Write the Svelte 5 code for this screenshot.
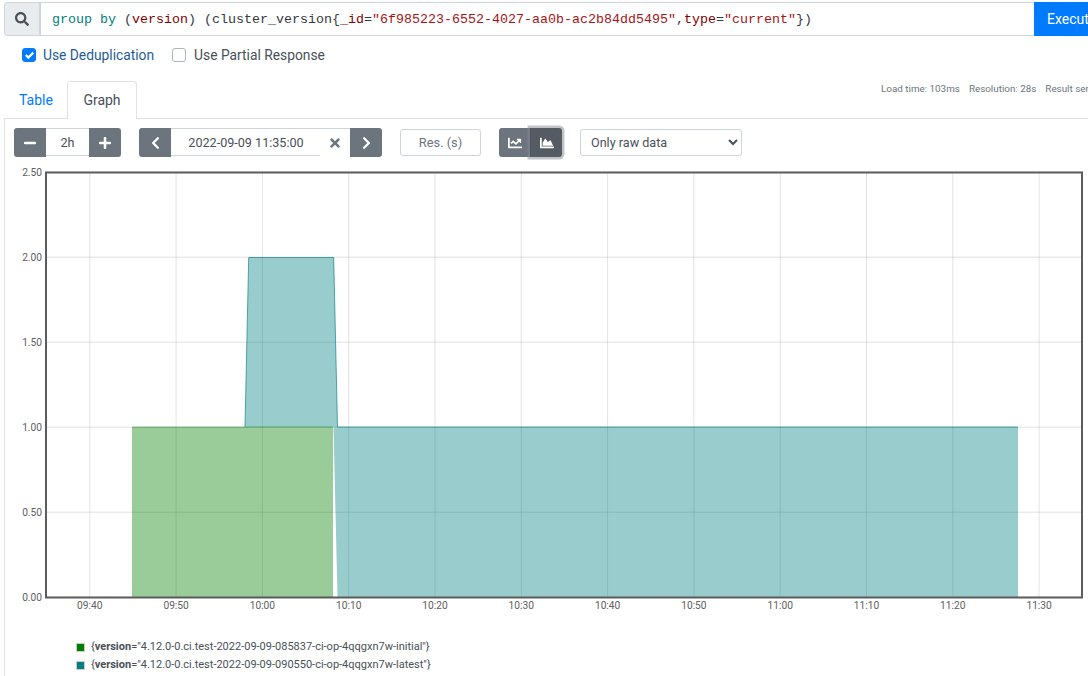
<script>
  const xTicks = [['09:40',89.8],['09:50',176.1],['10:00',262.4],['10:10',348.7],['10:20',435],['10:30',521.3],['10:40',607.6],['10:50',693.9],['11:00',780.2],['11:10',866.5],['11:20',952.8],['11:30',1039.1]];
  const yTicks = [['2.50',172.3],['2.00',257.3],['1.50',342.3],['1.00',427.3],['0.50',512.3],['0.00',597.3]];
</script>

<div class="page">
  <div class="query">
    <div class="prepend">
      <svg class="ic" viewBox="0 0 512 512" width="14" height="14"><path d="M505 442.7L405.3 343c-4.5-4.5-10.6-7-17-7H372c27.6-35.3 44-79.7 44-128C416 93.1 322.9 0 208 0S0 93.1 0 208s93.1 208 208 208c48.3 0 92.7-16.4 128-44v16.3c0 6.4 2.5 12.5 7 17l99.7 99.7c9.4 9.4 24.6 9.4 33.9 0l28.3-28.3c9.4-9.4 9.4-24.6.1-34zM208 336c-70.7 0-128-57.2-128-128 0-70.7 57.2-128 128-128 70.7 0 128 57.2 128 128 0 70.7-57.2 128-128 128z"/></svg>
    </div>
    <div class="code"><span class="kw">group by</span> (<span class="lb">version</span>) (cluster_version&#123;<span class="lb">_id</span>=<span class="str">"6f985223-6552-4027-aa0b-ac2b84dd5495"</span>,<span class="lb">type</span>=<span class="str">"current"</span>&#125;)</div>
    <button class="exec">Execute</button>
  </div>

  <div class="opts">
    <label class="opt on">
      <span class="box checked"><svg viewBox="0 0 8 8" width="9" height="9"><path fill="#fff" d="M6.564.75l-3.59 3.612-1.538-1.55L0 4.26l2.974 2.99L8 2.193z"/></svg></span>
      Use Deduplication
    </label>
    <label class="opt">
      <span class="box"></span>
      Use Partial Response
    </label>
  </div>

  <div class="tabs">
    <span class="tab">Table</span>
    <span class="tab active">Graph</span>
    <div class="stats"><span>Load time: 103ms</span><span>Resolution: 28s</span><span>Result series: 2</span></div>
  </div>

  <div class="pane">
    <div class="controls">
      <div class="group">
        <button class="btn"><svg class="ic" viewBox="0 0 448 512" width="12" height="14"><path d="M416 208H32c-17.67 0-32 14.33-32 32v32c0 17.67 14.33 32 32 32h384c17.67 0 32-14.33 32-32v-32c0-17.67-14.33-32-32-32z"/></svg></button>
        <div class="field range">2h</div>
        <button class="btn"><svg class="ic" viewBox="0 0 448 512" width="12" height="14"><path d="M416 208H272V64c0-17.67-14.33-32-32-32h-32c-17.67 0-32 14.33-32 32v144H32c-17.67 0-32 14.33-32 32v32c0 17.67 14.33 32 32 32h144v144c0 17.67 14.33 32 32 32h32c17.67 0 32-14.33 32-32V304h144c17.67 0 32-14.33 32-32v-32c0-17.67-14.33-32-32-32z"/></svg></button>
      </div>
      <div class="group end">
        <button class="btn"><svg class="ic" viewBox="0 0 320 512" width="9" height="14"><path d="M34.52 239.03L228.87 44.69c9.37-9.37 24.57-9.37 33.94 0l22.67 22.67c9.36 9.36 9.37 24.52.04 33.9L131.49 256l154.02 154.75c9.34 9.38 9.32 24.54-.04 33.9l-22.67 22.67c-9.37 9.37-24.57 9.37-33.94 0L34.52 272.97c-9.37-9.37-9.37-24.57 0-33.94z"/></svg></button>
        <div class="field date">2022-09-09 11:35:00</div>
        <div class="clear"><svg viewBox="0 0 352 512" width="10" height="14"><path fill="#6c757d" d="M242.72 256l100.07-100.07c12.28-12.28 12.28-32.19 0-44.48l-22.24-22.24c-12.28-12.28-32.19-12.28-44.48 0L176 189.28 75.93 89.21c-12.28-12.28-32.19-12.28-44.48 0L9.21 111.45c-12.28 12.28-12.28 32.19 0 44.48L109.28 256 9.21 356.07c-12.28 12.28-12.28 32.19 0 44.48l22.24 22.24c12.28 12.28 32.2 12.28 44.48 0L176 322.72l100.07 100.07c12.28 12.28 32.2 12.28 44.48 0l22.24-22.24c12.28-12.28 12.28-32.19 0-44.48L242.72 256z"/></svg></div>
        <button class="btn"><svg class="ic" viewBox="0 0 320 512" width="9" height="14"><path d="M285.476 272.971L91.132 467.314c-9.373 9.373-24.569 9.373-33.941 0l-22.667-22.667c-9.357-9.357-9.375-24.522-.04-33.901L188.505 256 34.484 101.255c-9.335-9.379-9.317-24.544.04-33.901l22.667-22.667c9.373-9.373 24.569-9.373 33.941 0L285.475 239.03c9.373 9.372 9.373 24.568.001 33.941z"/></svg></button>
      </div>
      <div class="res">Res. (s)</div>
      <div class="group stack">
        <button class="btn sline"><svg class="ic" viewBox="0 0 512 512" width="14" height="14"><path d="M496 384H64V80c0-8.84-7.16-16-16-16H16C7.16 64 0 71.16 0 80v336c0 17.67 14.33 32 32 32h464c8.84 0 16-7.16 16-16v-32c0-8.84-7.16-16-16-16zM464 96H345.94c-21.38 0-32.09 25.85-16.97 40.97l32.4 32.4L288 242.75l-73.37-73.37c-12.5-12.5-32.76-12.5-45.25 0l-68.69 68.69c-6.25 6.25-6.25 16.38 0 22.63l22.62 22.62c6.25 6.25 16.38 6.25 22.63 0L192 237.25l73.37 73.37c12.5 12.5 32.76 12.5 45.25 0l96-96 32.4 32.4c15.12 15.12 40.97 4.41 40.97-16.97V112c.01-8.84-7.15-16-15.99-16z"/></svg></button>
        <button class="btn sarea"><svg class="ic" viewBox="0 0 512 512" width="14" height="14"><path d="M500 384c6.6 0 12 5.4 12 12v40c0 6.6-5.4 12-12 12H12c-6.6 0-12-5.4-12-12V76c0-6.6 5.4-12 12-12h40c6.6 0 12 5.4 12 12v308h436zM372.7 159.5L288 216l-85.3-113.7c-5.1-6.8-15.5-6.3-19.9 1L96 248v104h384l-89.9-187.8c-3.2-6.5-11.4-8.7-17.4-4.7z"/></svg></button>
      </div>
      <select class="sel"><option>Only raw data</option></select>
    </div>

    <svg class="chart" viewBox="14 160 1074 466" width="1074" height="466">
      <rect x="46" y="172" width="1037" height="425" fill="#fff"/>
      {#each xTicks as t}
        <line x1={t[1]} x2={t[1]} y1="172" y2="597" class="grid"/>
        <text x={t[1]} y="609" text-anchor="middle" class="tick">{t[0]}</text>
      {/each}
      {#each yTicks as t}
        <line x1="46" x2="1083" y1={t[1]} y2={t[1]} class="grid hz"/>
        <text x="42" y={t[1] + 3.5} text-anchor="end" class="tick">{t[0]}</text>
      {/each}
      <polygon points="132,427 333,427 333,597 132,597" fill="#008000" fill-opacity="0.4"/>
      <polyline points="132,427 333,427" fill="none" stroke="#008000" stroke-opacity="0.4" stroke-width="1"/>
      <polygon points="245,427 248.7,257.5 333.7,257.5 337.5,427 1018,427 1018,597 337.5,597 333.5,427" fill="#008080" fill-opacity="0.4"/>
      <polyline points="245,427 248.7,257.5 333.7,257.5 337.5,427 1018,427" fill="none" stroke="#008080" stroke-opacity="0.65" stroke-width="1"/>
      <rect x="46" y="172.5" width="1036" height="425" fill="none" stroke="#5c5c5c" stroke-width="2"/>
    </svg>

    <div class="legend">
      <div class="item"><span class="swatch green"></span><span>&#123;<b>version</b>="4.12.0-0.ci.test-2022-09-09-085837-ci-op-4qqgxn7w-initial"&#125;</span></div>
      <div class="item"><span class="swatch teal"></span><span>&#123;<b>version</b>="4.12.0-0.ci.test-2022-09-09-090550-ci-op-4qqgxn7w-latest"&#125;</span></div>
    </div>
  </div>
</div>

<style>
  :global(body) { margin: 0; overflow: hidden; background: #fff; }
  .page { width: 1088px; height: 676px; overflow: hidden; font-family: Roboto, sans-serif; color: #495057; font-size: 13.33px; box-sizing: border-box; padding-top: 2px; }
  .ic { fill: currentColor; display: block; }
  .query { display: flex; margin-left: 4px; height: 34px; width: 1150px; }
  .prepend { width: 37px; box-sizing: border-box; background: #e9ecef; border: 1px solid #ced4da; border-right-width: 2px; border-radius: 4px 0 0 4px; display: flex; align-items: center; justify-content: center; color: #495057; }
  .code { width: 993px; box-sizing: border-box; border-top: 1px solid #ced4da; border-bottom: 1px solid #ced4da; padding-left: 11px; font-family: "Liberation Mono", monospace; font-size: 13.33px; line-height: 33px; color: #343a40; white-space: pre; }
  .kw { color: #008080; }
  .lb { color: #800000; }
  .str { color: #a31515; }
  .exec { width: 100px; height: 34px; border: 0; padding: 0 0 0 13px; text-align: left; background: #007bff; color: #fff; font-family: Roboto, sans-serif; font-size: 14px; border-radius: 0; }
  .opts { display: flex; margin: 10px 0 0 22px; height: 18px; font-size: 13.8px; line-height: 18px; }
  .opt { display: flex; align-items: center; margin-right: 18px; color: #495057; }
  .opt.on { color: #1f5c99; }
  .box { width: 14px; height: 14px; box-sizing: border-box; border: 1px solid #adb5bd; border-radius: 3px; margin-right: 8px; background: #fff; display: flex; align-items: center; justify-content: center; }
  .box.checked { background: #007bff; border-color: #007bff; margin-right: 7px; }
  .tabs { position: relative; display: flex; height: 37px; margin-top: 17px; margin-left: 4px; font-size: 14px; align-items: flex-end; }
  .tab { box-sizing: border-box; width: 63px; height: 37px; line-height: 37px; padding: 0 0 0 14px; color: #007bff; border: 1px solid transparent; border-bottom: 0; }
  .tab.active { color: #495057; background: #fff; border-color: #dee2e6; border-radius: 4px 4px 0 0; width: 70px; height: 38px; margin-bottom: -1px; position: relative; z-index: 1; padding: 0; text-align: center; }
  .stats { position: absolute; left: 877px; top: 2px; display: flex; gap: 9px; font-size: 9.85px; white-space: nowrap; color: #6c757d; line-height: 12px; }
  .pane { margin-left: 4px; border-left: 1px solid #dee2e6; border-top: 1px solid #dee2e6; padding: 9px 0 0 9px; height: 560px; box-sizing: border-box; }
  .controls { display: flex; align-items: center; height: 29px; }
  .group { display: flex; height: 29px; }
  .group.end { margin-left: 18px; }
  .btn { width: 32px; height: 29px; padding: 0; border: 0; background: #6c757d; color: #fff; display: flex; align-items: center; justify-content: center; }
  .group .btn:first-child { border-radius: 3px 0 0 3px; }
  .group .btn:last-child { border-radius: 0 3px 3px 0; }
  .field { box-sizing: border-box; height: 28px; line-height: 28px; text-align: center; background: #fff; font-size: 12.6px; border-bottom: 1px solid #ced4da; border-top: 1px solid #ced4da; }
  .range { width: 43px; }
  .date { width: 149px; padding-left: 1px; }
  .clear { width: 30px; height: 29px; display: flex; align-items: center; justify-content: center; background: #fff; border-top: 1px solid #ced4da; box-sizing: border-box; }
  .res { margin-left: 18px; width: 81px; height: 27px; box-sizing: border-box; border: 1px solid #ced4da; border-radius: 3px; text-align: center; line-height: 25px; font-size: 12.8px; color: #6c757d; }
  .stack { margin-left: 18px; }
  .sline { width: 31px; }
  .sarea { width: 32px; background: #545b62; box-shadow: 0 0 0 2.5px rgba(130,138,145,.5); position: relative; border-left: 1px solid #4e555b; }
  .sel { margin-left: 18px; width: 162px; height: 27px; box-sizing: border-box; border: 1px solid #ced4da; border-radius: 3px; background: #fff; padding: 0 6px; font-family: Roboto, sans-serif; font-size: 12.6px; color: #495057; }
  .chart { display: block; margin-top: 3px; }
  .grid { stroke: rgba(150,150,150,.28); stroke-width: 1; }
  .hz { stroke: rgba(150,150,150,.2); stroke-width: 1.4; }
  .tick { font-family: Roboto, sans-serif; font-size: 10.2px; fill: #606060; }
  .legend { margin: 12px 0 0 62px; font-size: 11px; line-height: 18px; color: #495057; }
  .item { display: flex; align-items: center; }
  .swatch { width: 9px; height: 9px; box-sizing: border-box; border: 1px solid #ccc; margin-right: 6px; }
  .green { background: #008000; }
  .teal { background: #008080; }
</style>
